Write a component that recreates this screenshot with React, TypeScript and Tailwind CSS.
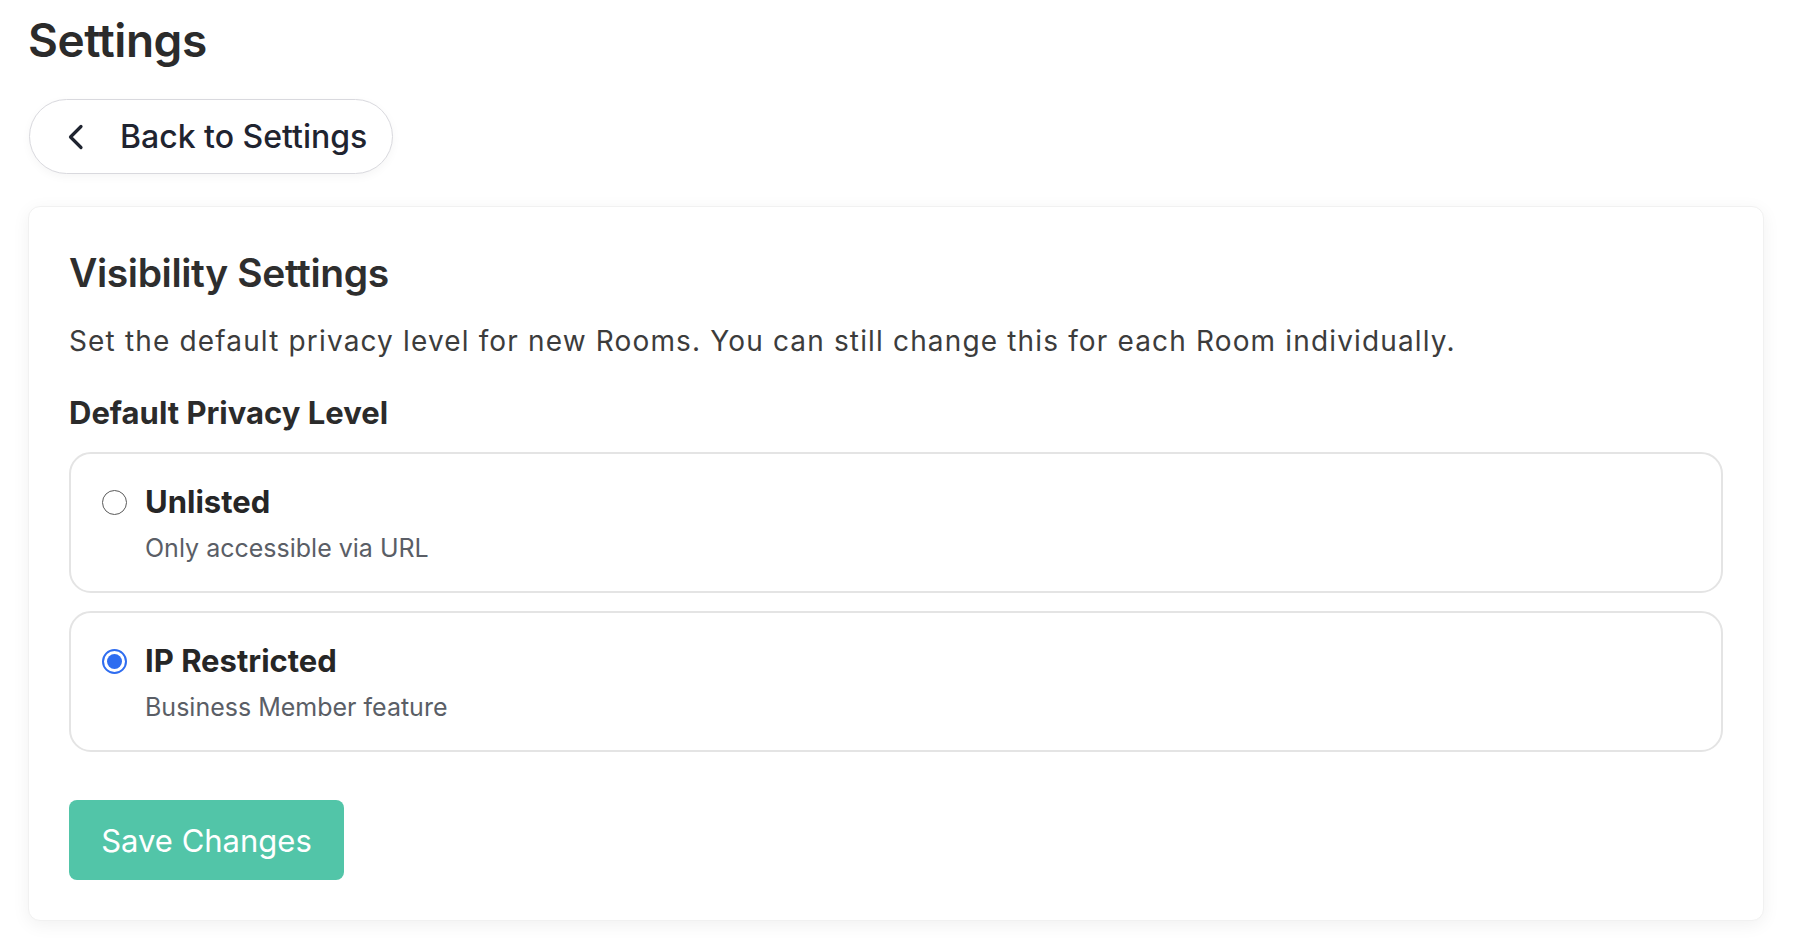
import React, { useState } from 'react';

const font = { fontFamily: 'Inter, "Noto Sans", sans-serif' };

type Option = { id: string; label: string; hint: string };

const options: Option[] = [
  { id: 'unlisted', label: 'Unlisted', hint: 'Only accessible via URL' },
  { id: 'ip', label: 'IP Restricted', hint: 'Business Member feature' },
];

const Radio = ({ checked }: { checked: boolean }) =>
  checked ? (
    <span className="flex h-[25px] w-[25px] shrink-0 items-center justify-center rounded-full border-2 border-[#2f6df0] bg-white">
      <span className="h-[15px] w-[15px] rounded-full bg-[#2f6df0]" />
    </span>
  ) : (
    <span className="h-[25px] w-[25px] shrink-0 rounded-full border-[1.5px] border-[#5a5a5a] bg-white" />
  );

const App: React.FC = () => {
  const [level, setLevel] = useState('ip');

  return (
    <div className="min-h-screen bg-white pl-[28px] pr-[34px] pt-[12px] pb-[25px]" style={font}>
      <h1 className="text-[46px] font-semibold leading-[56px] tracking-[-0.01em] text-[#2b2b2b]">Settings</h1>

      <button className="ml-[1px] mt-[31px] flex h-[75px] w-[364px] items-center rounded-full border-[1.5px] border-[#d9d9de] bg-white pl-[37px] shadow-[0_3px_10px_rgba(0,0,0,0.04)]">
        <svg width="18" height="26" viewBox="0 0 18 26" fill="none" stroke="#1f2430" strokeWidth="3.2" strokeLinecap="round" strokeLinejoin="round">
          <path d="M14 2.5 L3.5 13 L14 23.5" />
        </svg>
        <span className="ml-[35px] text-[32px] font-medium leading-none text-[#1f2430]">Back to Settings</span>
      </button>

      <div className="mt-[32px] rounded-[12px] border border-[#f1f1f1] bg-white px-[40px] pt-[41px] pb-[40px] shadow-[0_4px_18px_rgba(0,0,0,0.06)]">
        <h2 className="text-[39px] font-semibold leading-[50px] tracking-[-0.01em] text-[#2e2e2e]">Visibility Settings</h2>
        <p className="mt-[25px] text-[28px] leading-[36px] tracking-[1.15px] text-[#3c3c3c]">
          Set the default privacy level for new Rooms. You can still change this for each Room individually.
        </p>

        <h3 className="mt-[35px] text-[31px] font-bold leading-[38px] text-[#2b2b2b]">Default Privacy Level</h3>

        <div className="mt-[20px] flex flex-col gap-[18px]">
          {options.map((o) => (
            <label
              key={o.id}
              onClick={() => setLevel(o.id)}
              className="block cursor-pointer rounded-[22px] border-2 border-[#e4e4e4] bg-white pl-[31px] pt-[29px] pb-[27px]"
            >
              <div className="flex h-[38px] items-center gap-[18px]">
                <Radio checked={level === o.id} />
                <span className="text-[31px] font-bold leading-[38px] text-[#262626]">{o.label}</span>
              </div>
              <div className="mt-[11px] pl-[43px] text-[25px] leading-[32px] text-[#5a5e66]">{o.hint}</div>
            </label>
          ))}
        </div>

        <button className="mt-[48px] flex h-[80px] w-[275px] items-center justify-center rounded-[8px] bg-[#52c5a8] text-[31px] leading-none text-white">
          Save Changes
        </button>
      </div>
    </div>
  );
};

export default App;
